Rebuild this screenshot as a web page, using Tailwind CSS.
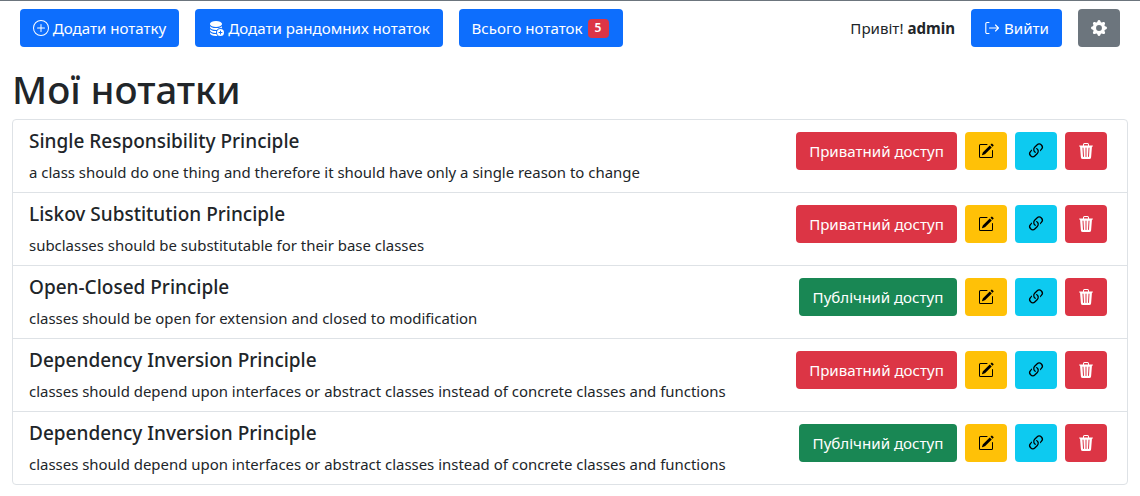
<!doctype html>
<html lang="uk">
<head>
<meta charset="utf-8">
<script src="https://cdn.jsdelivr.net/npm/@tailwindcss/browser@4"></script>
</head>
<body class="bg-white text-[#212529] font-['Noto_Sans',sans-serif] h-[496px] overflow-hidden border-t border-[#6c757d]">
<nav class="flex items-center h-[38px] mt-2 pl-5 pr-5">
  <a class="flex items-center justify-center gap-1 w-[159px] h-[38px] bg-[#0d6efd] text-white rounded text-[15.1px]">
    <svg class="w-4 h-4" viewBox="0 0 16 16" fill="currentColor"><path d="M8 15A7 7 0 1 1 8 1a7 7 0 0 1 0 14zm0 1A8 8 0 1 0 8 0a8 8 0 0 0 0 16z"/><path d="M8 4a.5.5 0 0 1 .5.5v3h3a.5.5 0 0 1 0 1h-3v3a.5.5 0 0 1-1 0v-3h-3a.5.5 0 0 1 0-1h3v-3A.5.5 0 0 1 8 4z"/></svg>
    <span>Додати нотатку</span>
  </a>
  <a class="flex items-center justify-center gap-1 w-[248px] h-[38px] ml-4 bg-[#0d6efd] text-white rounded text-[15.1px]">
    <svg class="w-4 h-4" viewBox="0 0 16 16" fill="currentColor"><path d="M12.5 16a3.5 3.5 0 1 0 0-7 3.5 3.5 0 0 0 0 7Zm.5-5v1h1a.5.5 0 0 1 0 1h-1v1a.5.5 0 0 1-1 0v-1h-1a.5.5 0 0 1 0-1h1v-1a.5.5 0 0 1 1 0ZM8 1c-1.573 0-3.022.289-4.096.777C2.875 2.245 2 2.993 2 4s.875 1.755 1.904 2.223C4.978 6.711 6.427 7 8 7s3.022-.289 4.096-.777C13.125 5.755 14 5.007 14 4s-.875-1.755-1.904-2.223C11.022 1.289 9.573 1 8 1Z"/><path d="M2 7v-.839c.457.432 1.004.751 1.49.972C4.722 7.693 6.318 8 8 8s3.278-.307 4.51-.867c.486-.22 1.033-.54 1.49-.972V7c0 .424-.155.802-.411 1.133a4.51 4.51 0 0 0-4.815 1.843A12.31 12.31 0 0 1 8 10c-1.573 0-3.022-.289-4.096-.777C2.875 8.755 2 8.007 2 7Zm6.257 3.998L8 11c-1.682 0-3.278-.307-4.51-.867-.486-.22-1.033-.54-1.49-.972V10c0 1.007.875 1.755 1.904 2.223C4.978 12.711 6.427 13 8 13h.027a4.552 4.552 0 0 1 .23-2.002Zm-.002 3L8 14c-1.682 0-3.278-.307-4.51-.867-.486-.22-1.033-.54-1.49-.972V13c0 1.007.875 1.755 1.904 2.223C4.978 15.711 6.427 16 8 16c.536 0 1.058-.034 1.555-.097a4.507 4.507 0 0 1-1.3-1.905Z"/></svg>
    <span>Додати рандомних нотаток</span>
  </a>
  <a class="flex items-center justify-center gap-[5px] w-[164px] h-[38px] ml-4 pr-[2px] bg-[#0d6efd] text-white rounded text-[15.1px]">
    <span>Всього нотаток</span>
    <span class="flex items-center justify-center w-[21px] h-[19px] bg-[#dc3545] rounded text-xs font-semibold">5</span>
  </a>
  <span class="ml-auto text-[15.1px]">Привіт! <b>admin</b></span>
  <a class="flex items-center justify-center gap-1 w-[91px] h-[38px] ml-4 bg-[#0d6efd] text-white rounded text-[15.1px]">
    <svg class="w-4 h-4" viewBox="0 0 16 16" fill="none" stroke="currentColor" stroke-width="1.1" stroke-linecap="round" stroke-linejoin="round"><path d="M5 2.500H3A1.200 1.200 0 0 0 1.800 3.700v8.600A1.200 1.200 0 0 0 3 13.500h2"/><path d="M5.500 8h9M11.500 5l3 3-3 3"/></svg>
    <span>Вийти</span>
  </a>
  <a class="flex items-center justify-center w-[42px] h-[38px] ml-4 bg-[#6c757d] text-white rounded">
    <svg class="w-4 h-4" viewBox="0 0 16 16" fill="currentColor"><path d="M9.405 1.05c-.413-1.4-2.397-1.4-2.81 0l-.1.34a1.464 1.464 0 0 1-2.105.872l-.31-.17c-1.283-.698-2.686.705-1.987 1.987l.169.311c.446.82.023 1.841-.872 2.105l-.34.1c-1.4.413-1.4 2.397 0 2.81l.34.1a1.464 1.464 0 0 1 .872 2.105l-.17.31c-.698 1.283.705 2.686 1.987 1.987l.311-.169a1.464 1.464 0 0 1 2.105.872l.1.34c.413 1.4 2.397 1.4 2.81 0l.1-.34a1.464 1.464 0 0 1 2.105-.872l.31.17c1.283.698 2.686-.705 1.987-1.987l-.169-.311a1.464 1.464 0 0 1 .872-2.105l.34-.1c1.4-.413 1.4-2.397 0-2.81l-.34-.1a1.464 1.464 0 0 1-.872-2.105l.17-.31c.698-1.283-.705-2.686-1.987-1.987l-.311.169a1.464 1.464 0 0 1-2.105-.872l-.1-.34zM8 10.930a2.929 2.929 0 1 1 0-5.860 2.929 2.929 0 0 1 0 5.858z"/></svg>
  </a>
</nav>
<h1 class="text-[38.3px] leading-[48px] font-medium ml-3 mt-[18px] mb-[6px]">Мої нотатки</h1>
<ul class="mx-3 border border-[#dee2e6] rounded divide-y divide-[#dee2e6]">
  <li class="flex h-[73px] pl-4 pr-5">
    <div class="flex-1 min-w-0 pt-[9px]">
      <h5 class="text-[19px] leading-6 font-medium">Single Responsibility Principle</h5>
      <p class="text-[14.95px] leading-6 mt-[7px]">a class should do one thing and therefore it should have only a single reason to change</p>
    </div>
    <div class="flex gap-2 pt-3">
      <a class="flex items-center justify-center w-[161px] h-[38px] bg-[#dc3545] text-white rounded text-[15.1px]">Приватний доступ</a>
      <a class="flex items-center justify-center w-[42px] h-[38px] bg-[#ffc107] text-black rounded"><svg class="w-4 h-4" viewBox="0 0 16 16" fill="currentColor"><path d="M15.502 1.94a.5.5 0 0 1 0 .706L14.459 3.69l-2-2L13.502.646a.5.5 0 0 1 .707 0l1.293 1.293zm-1.750 2.456-2-2L4.939 9.210a.5.5 0 0 0-.121.196l-.805 2.414a.25.25 0 0 0 .316.316l2.414-.805a.5.5 0 0 0 .196-.12l6.813-6.814z"/><path fill-rule="evenodd" d="M1 13.500A1.500 1.500 0 0 0 2.500 15h11a1.500 1.500 0 0 0 1.500-1.500v-6a.5.5 0 0 0-1 0v6a.5.5 0 0 1-.5.5h-11a.5.5 0 0 1-.5-.5v-11a.5.5 0 0 1 .5-.5H9a.5.5 0 0 0 0-1H2.500A1.500 1.500 0 0 0 1 2.500v11z"/></svg></a>
      <a class="flex items-center justify-center w-[42px] h-[38px] bg-[#0dcaf0] text-black rounded"><svg class="w-5 h-5" viewBox="0 0 16 16" fill="currentColor"><path d="M4.715 6.542 3.343 7.914a3 3 0 1 0 4.243 4.243l1.828-1.829A3 3 0 0 0 8.586 5.500L8 6.086a1.002 1.002 0 0 0-.154.199 2 2 0 0 1 .861 3.337L6.880 11.450a2 2 0 1 1-2.830-2.830l.793-.792a4.018 4.018 0 0 1-.128-1.287z"/><path d="M6.586 4.672A3 3 0 0 0 7.414 9.500l.775-.776a2 2 0 0 1-.896-3.346L9.120 3.550a2 2 0 1 1 2.830 2.830l-.793.792c.112.420.155.855.128 1.287l1.372-1.372a3 3 0 1 0-4.243-4.243L6.586 4.672z"/></svg></a>
      <a class="flex items-center justify-center w-[42px] h-[38px] bg-[#dc3545] text-white rounded"><svg class="w-4 h-4" viewBox="0 0 16 16" fill="currentColor"><path d="M11 1.500v1h3.500a.5.5 0 0 1 0 1h-.538l-.853 10.660A2 2 0 0 1 11.115 16h-6.230a2 2 0 0 1-1.994-1.840L2.038 3.500H1.500a.5.5 0 0 1 0-1H5v-1A1.500 1.500 0 0 1 6.500 0h3A1.500 1.500 0 0 1 11 1.500Zm-5 0v1h4v-1a.5.5 0 0 0-.5-.5h-3a.5.5 0 0 0-.5.5ZM4.500 5.029l.5 8.500a.5.5 0 1 0 .998-.06l-.5-8.500a.5.5 0 1 0-.998.06Zm6.530-.528a.5.5 0 0 0-.528.47l-.5 8.500a.5.5 0 0 0 .998.058l.5-8.500a.5.5 0 0 0-.47-.528ZM8 4.500a.5.5 0 0 0-.5.5v8.500a.5.5 0 0 0 1 0V5a.5.5 0 0 0-.5-.5Z"/></svg></a>
    </div>
  </li>
  <li class="flex h-[73px] pl-4 pr-5">
    <div class="flex-1 min-w-0 pt-[9px]">
      <h5 class="text-[19px] leading-6 font-medium">Liskov Substitution Principle</h5>
      <p class="text-[14.95px] leading-6 mt-[7px]">subclasses should be substitutable for their base classes</p>
    </div>
    <div class="flex gap-2 pt-3">
      <a class="flex items-center justify-center w-[161px] h-[38px] bg-[#dc3545] text-white rounded text-[15.1px]">Приватний доступ</a>
      <a class="flex items-center justify-center w-[42px] h-[38px] bg-[#ffc107] text-black rounded"><svg class="w-4 h-4" viewBox="0 0 16 16" fill="currentColor"><path d="M15.502 1.94a.5.5 0 0 1 0 .706L14.459 3.69l-2-2L13.502.646a.5.5 0 0 1 .707 0l1.293 1.293zm-1.750 2.456-2-2L4.939 9.210a.5.5 0 0 0-.121.196l-.805 2.414a.25.25 0 0 0 .316.316l2.414-.805a.5.5 0 0 0 .196-.12l6.813-6.814z"/><path fill-rule="evenodd" d="M1 13.500A1.500 1.500 0 0 0 2.500 15h11a1.500 1.500 0 0 0 1.500-1.500v-6a.5.5 0 0 0-1 0v6a.5.5 0 0 1-.5.5h-11a.5.5 0 0 1-.5-.5v-11a.5.5 0 0 1 .5-.5H9a.5.5 0 0 0 0-1H2.500A1.500 1.500 0 0 0 1 2.500v11z"/></svg></a>
      <a class="flex items-center justify-center w-[42px] h-[38px] bg-[#0dcaf0] text-black rounded"><svg class="w-5 h-5" viewBox="0 0 16 16" fill="currentColor"><path d="M4.715 6.542 3.343 7.914a3 3 0 1 0 4.243 4.243l1.828-1.829A3 3 0 0 0 8.586 5.500L8 6.086a1.002 1.002 0 0 0-.154.199 2 2 0 0 1 .861 3.337L6.880 11.450a2 2 0 1 1-2.830-2.830l.793-.792a4.018 4.018 0 0 1-.128-1.287z"/><path d="M6.586 4.672A3 3 0 0 0 7.414 9.500l.775-.776a2 2 0 0 1-.896-3.346L9.120 3.550a2 2 0 1 1 2.830 2.830l-.793.792c.112.420.155.855.128 1.287l1.372-1.372a3 3 0 1 0-4.243-4.243L6.586 4.672z"/></svg></a>
      <a class="flex items-center justify-center w-[42px] h-[38px] bg-[#dc3545] text-white rounded"><svg class="w-4 h-4" viewBox="0 0 16 16" fill="currentColor"><path d="M11 1.500v1h3.500a.5.5 0 0 1 0 1h-.538l-.853 10.660A2 2 0 0 1 11.115 16h-6.230a2 2 0 0 1-1.994-1.840L2.038 3.500H1.500a.5.5 0 0 1 0-1H5v-1A1.500 1.500 0 0 1 6.500 0h3A1.500 1.500 0 0 1 11 1.500Zm-5 0v1h4v-1a.5.5 0 0 0-.5-.5h-3a.5.5 0 0 0-.5.5ZM4.500 5.029l.5 8.500a.5.5 0 1 0 .998-.06l-.5-8.500a.5.5 0 1 0-.998.06Zm6.530-.528a.5.5 0 0 0-.528.47l-.5 8.500a.5.5 0 0 0 .998.058l.5-8.500a.5.5 0 0 0-.47-.528ZM8 4.500a.5.5 0 0 0-.5.5v8.500a.5.5 0 0 0 1 0V5a.5.5 0 0 0-.5-.5Z"/></svg></a>
    </div>
  </li>
  <li class="flex h-[73px] pl-4 pr-5">
    <div class="flex-1 min-w-0 pt-[9px]">
      <h5 class="text-[19px] leading-6 font-medium">Open-Closed Principle</h5>
      <p class="text-[14.95px] leading-6 mt-[7px]">classes should be open for extension and closed to modification</p>
    </div>
    <div class="flex gap-2 pt-3">
      <a class="flex items-center justify-center w-[158px] h-[38px] bg-[#198754] text-white rounded text-[15.1px]">Публічний доступ</a>
      <a class="flex items-center justify-center w-[42px] h-[38px] bg-[#ffc107] text-black rounded"><svg class="w-4 h-4" viewBox="0 0 16 16" fill="currentColor"><path d="M15.502 1.94a.5.5 0 0 1 0 .706L14.459 3.69l-2-2L13.502.646a.5.5 0 0 1 .707 0l1.293 1.293zm-1.750 2.456-2-2L4.939 9.210a.5.5 0 0 0-.121.196l-.805 2.414a.25.25 0 0 0 .316.316l2.414-.805a.5.5 0 0 0 .196-.12l6.813-6.814z"/><path fill-rule="evenodd" d="M1 13.500A1.500 1.500 0 0 0 2.500 15h11a1.500 1.500 0 0 0 1.500-1.500v-6a.5.5 0 0 0-1 0v6a.5.5 0 0 1-.5.5h-11a.5.5 0 0 1-.5-.5v-11a.5.5 0 0 1 .5-.5H9a.5.5 0 0 0 0-1H2.500A1.500 1.500 0 0 0 1 2.500v11z"/></svg></a>
      <a class="flex items-center justify-center w-[42px] h-[38px] bg-[#0dcaf0] text-black rounded"><svg class="w-5 h-5" viewBox="0 0 16 16" fill="currentColor"><path d="M4.715 6.542 3.343 7.914a3 3 0 1 0 4.243 4.243l1.828-1.829A3 3 0 0 0 8.586 5.500L8 6.086a1.002 1.002 0 0 0-.154.199 2 2 0 0 1 .861 3.337L6.880 11.450a2 2 0 1 1-2.830-2.830l.793-.792a4.018 4.018 0 0 1-.128-1.287z"/><path d="M6.586 4.672A3 3 0 0 0 7.414 9.500l.775-.776a2 2 0 0 1-.896-3.346L9.120 3.550a2 2 0 1 1 2.830 2.830l-.793.792c.112.420.155.855.128 1.287l1.372-1.372a3 3 0 1 0-4.243-4.243L6.586 4.672z"/></svg></a>
      <a class="flex items-center justify-center w-[42px] h-[38px] bg-[#dc3545] text-white rounded"><svg class="w-4 h-4" viewBox="0 0 16 16" fill="currentColor"><path d="M11 1.500v1h3.500a.5.5 0 0 1 0 1h-.538l-.853 10.660A2 2 0 0 1 11.115 16h-6.230a2 2 0 0 1-1.994-1.840L2.038 3.500H1.500a.5.5 0 0 1 0-1H5v-1A1.500 1.500 0 0 1 6.500 0h3A1.500 1.500 0 0 1 11 1.500Zm-5 0v1h4v-1a.5.5 0 0 0-.5-.5h-3a.5.5 0 0 0-.5.5ZM4.500 5.029l.5 8.500a.5.5 0 1 0 .998-.06l-.5-8.500a.5.5 0 1 0-.998.06Zm6.530-.528a.5.5 0 0 0-.528.47l-.5 8.500a.5.5 0 0 0 .998.058l.5-8.500a.5.5 0 0 0-.47-.528ZM8 4.500a.5.5 0 0 0-.5.5v8.500a.5.5 0 0 0 1 0V5a.5.5 0 0 0-.5-.5Z"/></svg></a>
    </div>
  </li>
  <li class="flex h-[73px] pl-4 pr-5">
    <div class="flex-1 min-w-0 pt-[9px]">
      <h5 class="text-[19px] leading-6 font-medium">Dependency Inversion Principle</h5>
      <p class="text-[14.95px] leading-6 mt-[7px]">classes should depend upon interfaces or abstract classes instead of concrete classes and functions</p>
    </div>
    <div class="flex gap-2 pt-3">
      <a class="flex items-center justify-center w-[161px] h-[38px] bg-[#dc3545] text-white rounded text-[15.1px]">Приватний доступ</a>
      <a class="flex items-center justify-center w-[42px] h-[38px] bg-[#ffc107] text-black rounded"><svg class="w-4 h-4" viewBox="0 0 16 16" fill="currentColor"><path d="M15.502 1.94a.5.5 0 0 1 0 .706L14.459 3.69l-2-2L13.502.646a.5.5 0 0 1 .707 0l1.293 1.293zm-1.750 2.456-2-2L4.939 9.210a.5.5 0 0 0-.121.196l-.805 2.414a.25.25 0 0 0 .316.316l2.414-.805a.5.5 0 0 0 .196-.12l6.813-6.814z"/><path fill-rule="evenodd" d="M1 13.500A1.500 1.500 0 0 0 2.500 15h11a1.500 1.500 0 0 0 1.500-1.500v-6a.5.5 0 0 0-1 0v6a.5.5 0 0 1-.5.5h-11a.5.5 0 0 1-.5-.5v-11a.5.5 0 0 1 .5-.5H9a.5.5 0 0 0 0-1H2.500A1.500 1.500 0 0 0 1 2.500v11z"/></svg></a>
      <a class="flex items-center justify-center w-[42px] h-[38px] bg-[#0dcaf0] text-black rounded"><svg class="w-5 h-5" viewBox="0 0 16 16" fill="currentColor"><path d="M4.715 6.542 3.343 7.914a3 3 0 1 0 4.243 4.243l1.828-1.829A3 3 0 0 0 8.586 5.500L8 6.086a1.002 1.002 0 0 0-.154.199 2 2 0 0 1 .861 3.337L6.880 11.450a2 2 0 1 1-2.830-2.830l.793-.792a4.018 4.018 0 0 1-.128-1.287z"/><path d="M6.586 4.672A3 3 0 0 0 7.414 9.500l.775-.776a2 2 0 0 1-.896-3.346L9.120 3.550a2 2 0 1 1 2.830 2.830l-.793.792c.112.420.155.855.128 1.287l1.372-1.372a3 3 0 1 0-4.243-4.243L6.586 4.672z"/></svg></a>
      <a class="flex items-center justify-center w-[42px] h-[38px] bg-[#dc3545] text-white rounded"><svg class="w-4 h-4" viewBox="0 0 16 16" fill="currentColor"><path d="M11 1.500v1h3.500a.5.5 0 0 1 0 1h-.538l-.853 10.660A2 2 0 0 1 11.115 16h-6.230a2 2 0 0 1-1.994-1.840L2.038 3.500H1.500a.5.5 0 0 1 0-1H5v-1A1.500 1.500 0 0 1 6.500 0h3A1.500 1.500 0 0 1 11 1.500Zm-5 0v1h4v-1a.5.5 0 0 0-.5-.5h-3a.5.5 0 0 0-.5.5ZM4.500 5.029l.5 8.500a.5.5 0 1 0 .998-.06l-.5-8.500a.5.5 0 1 0-.998.06Zm6.530-.528a.5.5 0 0 0-.528.47l-.5 8.500a.5.5 0 0 0 .998.058l.5-8.500a.5.5 0 0 0-.47-.528ZM8 4.500a.5.5 0 0 0-.5.5v8.500a.5.5 0 0 0 1 0V5a.5.5 0 0 0-.5-.5Z"/></svg></a>
    </div>
  </li>
  <li class="flex h-[72px] pl-4 pr-5">
    <div class="flex-1 min-w-0 pt-[9px]">
      <h5 class="text-[19px] leading-6 font-medium">Dependency Inversion Principle</h5>
      <p class="text-[14.95px] leading-6 mt-[7px]">classes should depend upon interfaces or abstract classes instead of concrete classes and functions</p>
    </div>
    <div class="flex gap-2 pt-3">
      <a class="flex items-center justify-center w-[158px] h-[38px] bg-[#198754] text-white rounded text-[15.1px]">Публічний доступ</a>
      <a class="flex items-center justify-center w-[42px] h-[38px] bg-[#ffc107] text-black rounded"><svg class="w-4 h-4" viewBox="0 0 16 16" fill="currentColor"><path d="M15.502 1.94a.5.5 0 0 1 0 .706L14.459 3.69l-2-2L13.502.646a.5.5 0 0 1 .707 0l1.293 1.293zm-1.750 2.456-2-2L4.939 9.210a.5.5 0 0 0-.121.196l-.805 2.414a.25.25 0 0 0 .316.316l2.414-.805a.5.5 0 0 0 .196-.12l6.813-6.814z"/><path fill-rule="evenodd" d="M1 13.500A1.500 1.500 0 0 0 2.500 15h11a1.500 1.500 0 0 0 1.500-1.500v-6a.5.5 0 0 0-1 0v6a.5.5 0 0 1-.5.5h-11a.5.5 0 0 1-.5-.5v-11a.5.5 0 0 1 .5-.5H9a.5.5 0 0 0 0-1H2.500A1.500 1.500 0 0 0 1 2.500v11z"/></svg></a>
      <a class="flex items-center justify-center w-[42px] h-[38px] bg-[#0dcaf0] text-black rounded"><svg class="w-5 h-5" viewBox="0 0 16 16" fill="currentColor"><path d="M4.715 6.542 3.343 7.914a3 3 0 1 0 4.243 4.243l1.828-1.829A3 3 0 0 0 8.586 5.500L8 6.086a1.002 1.002 0 0 0-.154.199 2 2 0 0 1 .861 3.337L6.880 11.450a2 2 0 1 1-2.830-2.830l.793-.792a4.018 4.018 0 0 1-.128-1.287z"/><path d="M6.586 4.672A3 3 0 0 0 7.414 9.500l.775-.776a2 2 0 0 1-.896-3.346L9.120 3.550a2 2 0 1 1 2.830 2.830l-.793.792c.112.420.155.855.128 1.287l1.372-1.372a3 3 0 1 0-4.243-4.243L6.586 4.672z"/></svg></a>
      <a class="flex items-center justify-center w-[42px] h-[38px] bg-[#dc3545] text-white rounded"><svg class="w-4 h-4" viewBox="0 0 16 16" fill="currentColor"><path d="M11 1.500v1h3.500a.5.5 0 0 1 0 1h-.538l-.853 10.660A2 2 0 0 1 11.115 16h-6.230a2 2 0 0 1-1.994-1.840L2.038 3.500H1.500a.5.5 0 0 1 0-1H5v-1A1.500 1.500 0 0 1 6.500 0h3A1.500 1.500 0 0 1 11 1.500Zm-5 0v1h4v-1a.5.5 0 0 0-.5-.5h-3a.5.5 0 0 0-.5.5ZM4.500 5.029l.5 8.500a.5.5 0 1 0 .998-.06l-.5-8.500a.5.5 0 1 0-.998.06Zm6.530-.528a.5.5 0 0 0-.528.47l-.5 8.500a.5.5 0 0 0 .998.058l.5-8.500a.5.5 0 0 0-.47-.528ZM8 4.500a.5.5 0 0 0-.5.5v8.500a.5.5 0 0 0 1 0V5a.5.5 0 0 0-.5-.5Z"/></svg></a>
    </div>
  </li>
</ul>
</body>
</html>
